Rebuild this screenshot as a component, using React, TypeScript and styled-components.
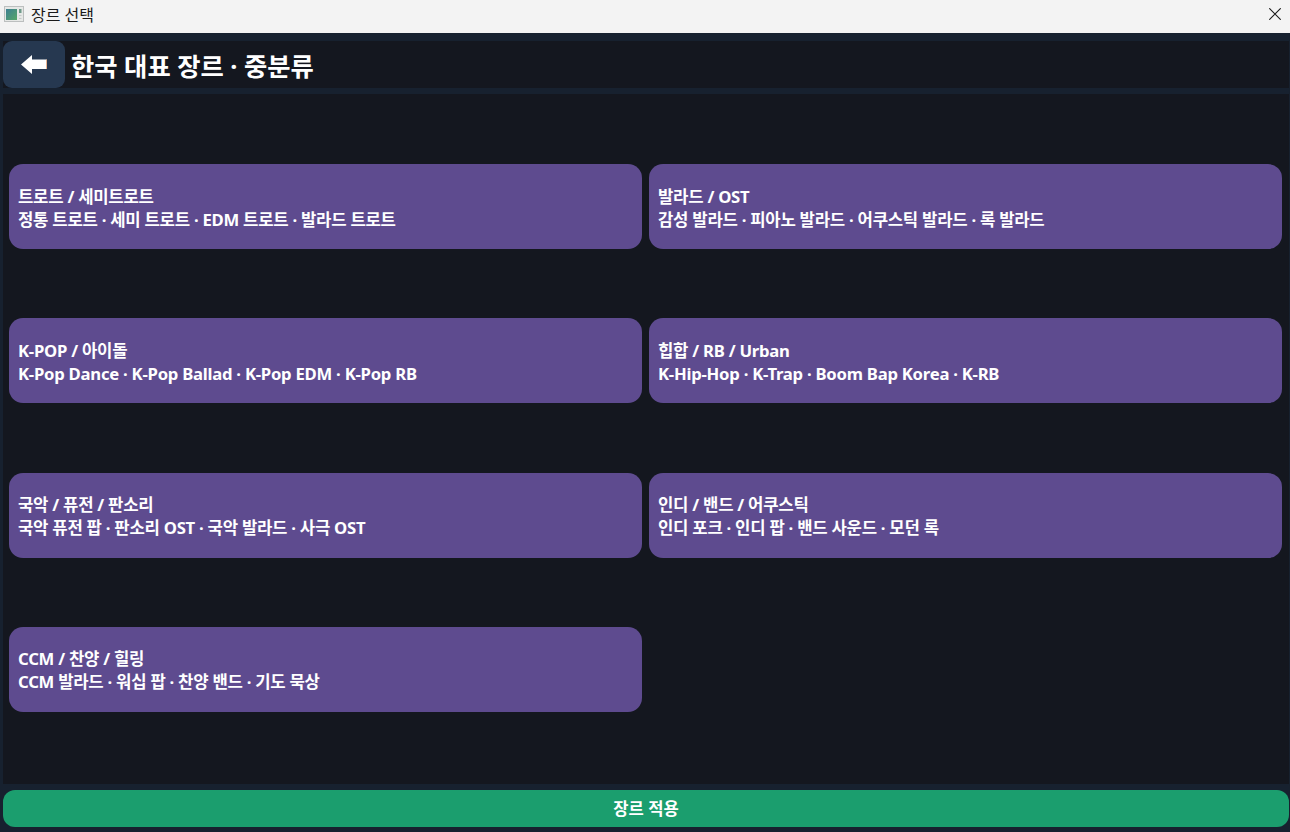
import styled, { createGlobalStyle } from "styled-components";

const genres = [
  { title: "트로트 / 세미트로트", items: "정통 트로트 · 세미 트로트 · EDM 트로트 · 발라드 트로트" },
  { title: "발라드 / OST", items: "감성 발라드 · 피아노 발라드 · 어쿠스틱 발라드 · 록 발라드" },
  { title: "K-POP / 아이돌", items: "K-Pop Dance · K-Pop Ballad · K-Pop EDM · K-Pop RB" },
  { title: "힙합 / RB / Urban", items: "K-Hip-Hop · K-Trap · Boom Bap Korea · K-RB" },
  { title: "국악 / 퓨전 / 판소리", items: "국악 퓨전 팝 · 판소리 OST · 국악 발라드 · 사극 OST" },
  { title: "인디 / 밴드 / 어쿠스틱", items: "인디 포크 · 인디 팝 · 밴드 사운드 · 모던 록" },
  { title: "CCM / 찬양 / 힐링", items: "CCM 발라드 · 워십 팝 · 찬양 밴드 · 기도 묵상" },
];

export default function App() {
  return (
    <Window>
      <GlobalStyle />
      <TitleBar>
        <TitleGroup>
          <AppIcon viewBox="0 0 20 16">
            <defs>
              <linearGradient id="appIconFill" x1="0" y1="0" x2="1" y2="1">
                <stop offset="0" stopColor="#3d7f92" />
                <stop offset="1" stopColor="#57a868" />
              </linearGradient>
            </defs>
            <rect x="0.5" y="0.5" width="19" height="15" fill="#e6e8e6" stroke="#bcbfbf" />
            <rect x="2" y="3" width="11" height="11" fill="url(#appIconFill)" />
            <rect x="15" y="3" width="2.5" height="4" fill="#6f9a8a" />
            <rect x="15" y="9" width="2.5" height="1" fill="#c4c8c8" />
            <rect x="15" y="12" width="2.5" height="1" fill="#c4c8c8" />
          </AppIcon>
          <WindowTitle>장르 선택</WindowTitle>
        </TitleGroup>
        <CloseIcon viewBox="0 0 12 12">
          <path d="M0.3 0.3L11.7 11.7M11.7 0.3L0.3 11.7" stroke="#1a1a1a" strokeWidth="1.1" fill="none" />
        </CloseIcon>
      </TitleBar>
      <Content>
        <Header>
          <BackButton>
            <svg width="26" height="19" viewBox="0 0 26 19">
              <path d="M0 9.5L11 0V4.5H26V14H11V19Z" fill="#fff" />
              <rect x="25.4" y="4.5" width="0.6" height="9.5" fill="#e0854a" />
            </svg>
          </BackButton>
          <HeaderTitle>한국 대표 장르 · 중분류</HeaderTitle>
        </Header>
        <Panel>
          <Grid>
            {genres.map((g) => (
              <GenreCard key={g.title}>
                <span>{g.title}</span>
                <span>{g.items}</span>
              </GenreCard>
            ))}
          </Grid>
        </Panel>
        <ApplyButton>장르 적용</ApplyButton>
      </Content>
    </Window>
  );
}

const GlobalStyle = createGlobalStyle`
  html, body {
    margin: 0;
    padding: 0;
    height: 100%;
    overflow: hidden;
    background: #17212f;
  }
  #root {
    height: 100%;
  }
`;

const Window = styled.div`
  width: 1290px;
  height: 832px;
  display: flex;
  flex-direction: column;
  font-family: "Noto Sans", "Noto Sans CJK KR", sans-serif;
`;

const TitleBar = styled.div`
  height: 33px;
  flex: none;
  background: #f3f3f3;
  display: flex;
  align-items: center;
  justify-content: space-between;
  padding: 0 9px 5px 4px;
  box-sizing: border-box;
`;

const TitleGroup = styled.div`
  display: flex;
  align-items: center;
  gap: 7px;
`;

const AppIcon = styled.svg`
  width: 20px;
  height: 16px;
`;

const WindowTitle = styled.span`
  font-size: 16px;
  color: #1a1a1a;
`;

const CloseIcon = styled.svg`
  width: 12px;
  height: 12px;
`;

const Content = styled.div`
  flex: 1;
  background: #17212f;
  display: flex;
  flex-direction: column;
  padding: 8px 1px 5px 3px;
  min-height: 0;
`;

const Header = styled.div`
  height: 47px;
  flex: none;
  background: #14171f;
  display: flex;
  align-items: center;
`;

const BackButton = styled.button`
  width: 62px;
  height: 47px;
  border: none;
  padding: 0;
  border-radius: 9px;
  background: #263850;
  display: flex;
  align-items: center;
  justify-content: center;
`;

const HeaderTitle = styled.h1`
  margin: 0 0 0 6px;
  font-size: 25.3px;
  font-weight: 700;
  color: #fff;
`;

const Panel = styled.div`
  flex: none;
  height: 690px;
  margin-top: 6px;
  background: #14171f;
  box-sizing: border-box;
  padding: 70px 7px 0 6px;
`;

const Grid = styled.div`
  display: grid;
  grid-template-columns: 1fr 1fr;
  column-gap: 7px;
  row-gap: 69.33px;
`;

const GenreCard = styled.button`
  height: 85px;
  border: none;
  border-radius: 14px;
  background: #5e4b8f;
  color: #fff;
  font-family: inherit;
  font-size: 16.7px;
  letter-spacing: -0.25px;
  font-weight: 700;
  text-align: left;
  padding: 2px 9px 0;
  display: flex;
  flex-direction: column;
  justify-content: center;
  line-height: 23px;
`;

const ApplyButton = styled.button`
  height: 37px;
  flex: none;
  margin-top: 6px;
  border: none;
  border-radius: 12px;
  background: #1b9e6e;
  color: #fff;
  font-family: inherit;
  font-size: 16.6px;
  font-weight: 700;
  padding: 0 0 2px;
`;
